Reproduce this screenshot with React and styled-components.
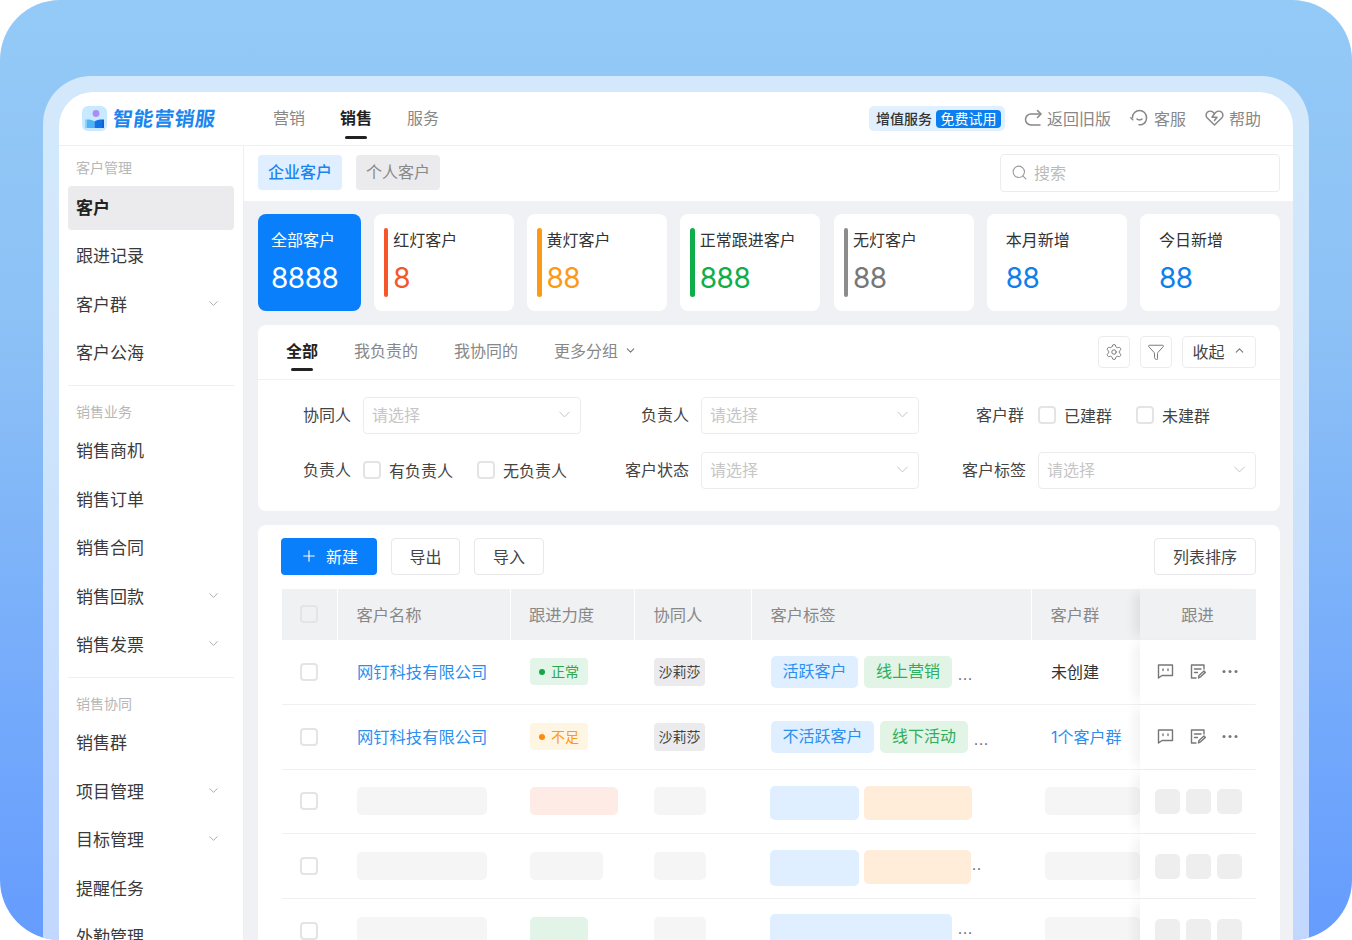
import React from "react";
import styled, { createGlobalStyle } from "styled-components";
import { Search, ChevronDown, ChevronUp, Settings, Funnel, Plus } from "lucide-react";

const GlobalStyle = createGlobalStyle`
  html, body {
    margin: 0;
    background: #fff;
    font-family: Inter, "Noto Sans CJK SC", sans-serif;
    color: #333;
    overflow: hidden;
  }
  * { box-sizing: border-box; }
`;

const Stage = styled.div`
  width: 1352px;
  height: 940px;
  padding: 76px 43px 0;
  border-radius: 60px;
  overflow: hidden;
  background: linear-gradient(180deg, #94caf6 0%, #8cc1f6 35%, #659cfe 100%);
`;

const Frame = styled.div`
  height: 864px;
  padding: 16px 16px 0;
  border-radius: 48px 48px 0 0;
  background: rgba(255, 255, 255, 0.6);
`;

const Shell = styled.div`
  height: 848px;
  border-radius: 34px 34px 0 0;
  overflow: hidden;
  background: #fff;
  display: flex;
  flex-direction: column;
`;

const TopBar = styled.header`
  height: 54px;
  flex: none;
  display: flex;
  align-items: center;
  padding: 0 32px 0 23px;
  border-bottom: 1px solid #f0f0f2;
`;

const Brand = styled.div`
  width: 134px;
  display: flex;
  align-items: center;
  gap: 6px;
`;

const BrandName = styled.span`
  display: inline-block;
  margin-top: -3px;
  font-size: 20px;
  font-weight: 700;
  letter-spacing: 0.6px;
  color: #1b86ee;
  white-space: nowrap;
  transform: skewX(-7deg);
`;

const TopNav = styled.nav`
  margin: -4px 0 0 57px;
  display: flex;
  gap: 35px;
`;

const TopNavItem = styled.span`
  position: relative;
  font-size: 16px;
  font-weight: ${(p) => (p.$active ? 700 : 400)};
  color: ${(p) => (p.$active ? "#222" : "#888")};
  &::after {
    content: "";
    display: ${(p) => (p.$active ? "block" : "none")};
    position: absolute;
    left: 5px;
    right: 5px;
    bottom: -10px;
    height: 3px;
    border-radius: 2px;
    background: #222;
  }
`;

const TopActions = styled.div`
  margin-left: auto;
  display: flex;
  align-items: center;
  gap: 19px;
`;

const ValueChip = styled.div`
  height: 25px;
  padding: 0 4px 2px 7px;
  display: flex;
  align-items: center;
  gap: 4px;
  border-radius: 5px;
  background: #e0f0ff;
  font-size: 14px;
  font-weight: 500;
  color: #333;
`;

const ChipBadge = styled.span`
  height: 18px;
  margin-bottom: -2px;
  line-height: 17px;
  padding: 0 4.5px;
  border-radius: 4px;
  background: #0b7ff0;
  color: #fff;
  font-weight: 400;
`;

const TopAction = styled.span`
  margin-top: -2px;
  display: flex;
  align-items: center;
  gap: 5px;
  font-size: 16px;
  color: #888;
`;

const Body = styled.div`
  flex: 1;
  min-height: 0;
  display: flex;
`;

const Sidebar = styled.aside`
  width: 185px;
  flex: none;
  padding: 0 9px;
  border-right: 1px solid #efeff1;
`;

const MenuSection = styled.section`
  padding: ${(p) => (p.$first ? "12px" : "16px")} 0 9.5px;
  border-bottom: ${(p) => (p.$last ? "none" : "1.5px solid #efefef")};
`;

const MenuTitle = styled.div`
  height: 20px;
  line-height: 20px;
  margin: 0 0 8px 8px;
  font-size: 14px;
  color: #b7b7b7;
`;

const MenuList = styled.div`
  display: flex;
  flex-direction: column;
  gap: 5px;
`;

const MenuItem = styled.div`
  height: 43.5px;
  padding: 0 13px 3px 8px;
  display: flex;
  align-items: center;
  justify-content: space-between;
  border-radius: 4px;
  font-size: 17px;
  font-weight: ${(p) => (p.$active ? 700 : 400)};
  color: ${(p) => (p.$active ? "#222" : "#3a3a3a")};
  background: ${(p) => (p.$active ? "#ebebed" : "transparent")};
`;

const Main = styled.main`
  flex: 1;
  min-width: 0;
  background: #f0f1f5;
`;

const SubBar = styled.div`
  height: 55px;
  padding: 8px 13px 0 14px;
  display: flex;
  align-items: flex-start;
  gap: 14px;
  background: #fff;
`;

const SubTab = styled.span`
  margin-top: 1px;
  height: 35px;
  line-height: 35px;
  padding: 0 10px;
  border-radius: 4px;
  font-size: 16px;
  font-weight: ${(p) => (p.$active ? 500 : 400)};
  color: ${(p) => (p.$active ? "#1d84ee" : "#888")};
  background: ${(p) => (p.$active ? "#e0efff" : "#ebebed")};
`;

const SearchBox = styled.div`
  margin-left: auto;
  width: 280px;
  height: 38px;
  padding: 0 10px 2px;
  display: flex;
  align-items: center;
  gap: 6px;
  border: 1.5px solid #ececee;
  border-radius: 4px;
  font-size: 16px;
  color: #bbb;
`;

const Content = styled.div`
  padding: 13px 13px 0 14px;
  display: flex;
  flex-direction: column;
  gap: 14px;
`;

const StatRow = styled.div`
  display: grid;
  grid-template-columns: 102.5px repeat(6, 140px);
  justify-content: space-between;
`;

const StatCard = styled.div`
  height: 97px;
  padding: 14px 10px 14px ${(p) => (p.$primary ? "13px" : p.$bar ? "10px" : "19px")};
  display: flex;
  gap: 5px;
  border-radius: 8px;
  background: ${(p) => (p.$primary ? "#0a7ffb" : "#fff")};
  color: ${(p) => (p.$primary ? "#fff" : "#333")};
`;

const StatBar = styled.span`
  width: 4.5px;
  border-radius: 3px;
  background: ${(p) => p.$color};
`;

const StatText = styled.div`
  display: flex;
  flex-direction: column;
  gap: 9px;
`;

const StatLabel = styled.span`
  height: 24px;
  line-height: 24px;
  font-size: 16px;
  white-space: nowrap;
`;

const StatValue = styled.span`
  height: 34px;
  line-height: 34px;
  font-size: 28px;
  font-weight: 400;
  letter-spacing: -0.5px;
  color: ${(p) => p.$color || "inherit"};
`;

const Card = styled.section`
  border-radius: 8px 8px 0 0;
  background: #fff;
`;

const FilterCard = styled(Card)`
  height: 186px;
  border-radius: 8px;
`;

const GroupBar = styled.div`
  height: 55px;
  padding: 0 24px 0 28px;
  display: flex;
  align-items: center;
  gap: 36px;
  border-bottom: 1.5px solid #f1f1f3;
`;

const GroupTab = styled.span`
  position: relative;
  margin-top: -4px;
  display: flex;
  align-items: center;
  gap: 6px;
  font-size: 16px;
  font-weight: ${(p) => (p.$active ? 700 : 400)};
  color: ${(p) => (p.$active ? "#222" : "#888")};
  &::after {
    content: "";
    display: ${(p) => (p.$active ? "block" : "none")};
    position: absolute;
    left: 5px;
    right: 5px;
    bottom: -9px;
    height: 3px;
    border-radius: 2px;
    background: #222;
  }
`;

const GroupTools = styled.div`
  margin-left: auto;
  display: flex;
  gap: 10px;
`;

const ToolButton = styled.button`
  width: ${(p) => (p.$wide ? "74px" : "32px")};
  height: 32px;
  padding: 0 0 ${(p) => (p.$wide ? "3px" : "0")};
  display: flex;
  align-items: center;
  justify-content: center;
  gap: 8px;
  border: 1.5px solid #ececee;
  border-radius: 4px;
  background: #fff;
  font: inherit;
  font-size: 16px;
  color: #444;
`;

const FilterGrid = styled.div`
  padding: 17px 24px 0 0;
  display: grid;
  grid-template-columns: 323px 338px 337px;
  row-gap: 18px;
`;

const Field = styled.div`
  height: 37px;
  display: flex;
  align-items: center;
  justify-content: flex-end;
  gap: ${(p) => p.$gap ?? 12}px;
`;

const FieldLabel = styled.span`
  margin-top: -3px;
  font-size: 16px;
  color: #444;
`;

const Select = styled.div`
  width: 218px;
  height: 37px;
  padding: 0 6px 3px 8px;
  display: flex;
  align-items: center;
  justify-content: space-between;
  border: 1.5px solid #ececee;
  border-radius: 4px;
  font-size: 16px;
  color: #c6c6c6;
`;

const Options = styled.div`
  width: 218px;
  margin-top: -2px;
  display: flex;
  gap: 24px;
`;

const Option = styled.label`
  display: flex;
  align-items: center;
  gap: 8px;
  font-size: 16px;
  color: #444;
`;

const Check = styled.span`
  display: block;
  flex: none;
  width: 18px;
  height: 18px;
  border: 2px solid #e4e4e6;
  border-radius: 4px;
  background: ${(p) => (p.$muted ? "transparent" : "#fff")};
`;

const TableCard = styled(Card)`
  padding: 13px 24px 0 24px;
`;

const Toolbar = styled.div`
  height: 37px;
  margin: 0 0 14px -1px;
  display: flex;
  gap: 14px;
`;

const ActionButton = styled.button`
  width: ${(p) => p.$width}px;
  height: 37px;
  padding: 0 0 2px;
  margin-left: ${(p) => (p.$push ? "auto" : "0")};
  display: flex;
  align-items: center;
  justify-content: center;
  gap: 8px;
  border: ${(p) => (p.$primary ? "none" : "1.5px solid #e8e8ea")};
  border-radius: 4px;
  background: ${(p) => (p.$primary ? "#0a7ffb" : "#fff")};
  color: ${(p) => (p.$primary ? "#fff" : "#444")};
  font: inherit;
  font-size: 16px;
`;

const columns = "56px 173px 124px 117px 280px 108px 116px";

const HeadRow = styled.div`
  display: grid;
  grid-template-columns: ${columns};
  height: 51px;
`;

const HeadCell = styled.div`
  padding: 0 0 2px ${(p) => p.$pad ?? 18.5}px;
  display: flex;
  align-items: center;
  justify-content: ${(p) => (p.$center ? "center" : "flex-start")};
  border-right: 1.5px solid ${(p) => (p.$seam ? "#fff" : "transparent")};
  background: #f0f1f3;
  font-size: 16.3px;
  color: #888;
`;

const PinnedHead = styled(HeadCell)`
  box-shadow: -10px 0 10px -4px rgba(0, 0, 0, 0.07);
`;

const Row = styled.div`
  display: grid;
  grid-template-columns: ${columns};
  height: 64.8px;
  border-bottom: 1.5px solid #f0f0f2;
`;

const Cell = styled.div`
  min-width: 0;
  padding-left: ${(p) => p.$pad ?? 18}px;
  display: flex;
  align-items: center;
  gap: 6px;
  overflow: hidden;
  font-size: 16px;
  white-space: nowrap;
`;

const TagCell = styled(Cell)`
  padding-top: ${(p) => p.$top}px;
  gap: 5px;
  align-items: flex-start;
`;

const PinnedCell = styled(Cell)`
  gap: ${(p) => p.$gap}px;
  overflow: visible;
  background: #fff;
  box-shadow: -10px 0 10px -4px rgba(0, 0, 0, 0.05);
`;

const CellText = styled.span`
  margin-top: -2px;
  color: ${(p) => (p.$link ? "#2b8ff0" : "#333")};
  font-size: ${(p) => p.$size || 16}px;
`;

const StatusTag = styled.span`
  height: 27px;
  padding: 0 9px 2px 9px;
  display: flex;
  align-items: center;
  gap: 6px;
  border-radius: 4px;
  font-size: 14px;
  color: ${(p) => p.$color};
  background: ${(p) => p.$bg};
  &::before {
    content: "";
    width: 6px;
    height: 6px;
    margin-bottom: -2px;
    border-radius: 50%;
    background: ${(p) => p.$dot};
  }
`;

const PersonTag = styled.span`
  height: 28px;
  line-height: 27px;
  padding: 0 4.5px;
  border-radius: 4px;
  background: #ebebed;
  font-size: 14px;
  color: #444;
`;

const LabelTag = styled.span`
  height: 32px;
  line-height: 31px;
  padding: 0 ${(p) => (p.$tone === "green" ? 12 : 11.5)}px;
  border-radius: 5px;
  color: ${(p) => (p.$tone === "green" ? "#2fae5c" : "#2b8ff0")};
  background: ${(p) => (p.$tone === "green" ? "#e2f4e6" : "#dfefff")};
`;

const Dots = styled.span`
  margin-top: 6px;
  font-size: 14px;
  color: #555;
  letter-spacing: 1px;
`;

const SkeletonDots = styled(Dots)`
  margin-left: ${(p) => p.$shift}px;
`;

const Skeleton = styled.span`
  flex: none;
  display: block;
  width: ${(p) => p.$w}px;
  height: ${(p) => p.$h || 28}px;
  border-radius: 5px;
  background: ${(p) => p.$bg || "#f5f5f5"};
`;

const IconButton = styled.span`
  width: 26px;
  display: flex;
  justify-content: center;
  color: #777;
`;

const LogoMark = () => (
  <svg width="25" height="25" viewBox="0 0 25 25">
    <rect width="25" height="25" rx="6" fill="#c8e9ff" />
    <circle cx="14" cy="7.5" r="3.4" fill="#a98cf5" />
    <path d="M5 13.5c3 0 5.5.6 7.5 2V22H5z" fill="#4db4f5" />
    <path d="M20 13.5c-3 0-5.5.6-7.5 2V22H20z" fill="#1273e6" />
    <path d="M20 13.5h2V22h-2z" fill="#0d62d4" />
    <path d="M5 13.5H3V22h2z" fill="#87d2fa" />
  </svg>
);

const BackIcon = () => (
  <svg width="18" height="18" viewBox="0 0 18 18" fill="none" stroke="#888" strokeWidth="1.5" strokeLinecap="round" strokeLinejoin="round">
    <path d="M16.5 5H7a5.5 5.5 0 0 0 0 11h9" />
    <path d="M13.5 1.5L17 5l-3.5 3.5" />
  </svg>
);

const ServiceIcon = () => (
  <svg width="19" height="19" viewBox="0 0 19 19" fill="none" stroke="#888" strokeWidth="1.5" strokeLinecap="round">
    <path d="M2.5 9.5a7 7 0 0 1 14 0" />
    <path d="M.8 9.8l2 1.900" />
    <path d="M16.5 9.5a7.5 7.5 0 0 1-5 7.300H9" />
    <path d="M7 11c1.2 1.2 3.8 1.2 5 0" />
  </svg>
);

const HeartIcon = () => (
  <svg width="19" height="18" viewBox="0 0 19 18" fill="none" stroke="#888" strokeWidth="1.5" strokeLinejoin="round" strokeLinecap="round">
    <path d="M9.5 16L2.3 9a4 4 0 0 1 0-5.700 4.2 4.2 0 0 1 5.800 0l1.400 1.400 1.400-1.400a4.2 4.2 0 0 1 5.800 0 4 4 0 0 1 0 5.700z" />
    <path d="M9.5 4.700L7 8.200h5L9.500 11.500" />
  </svg>
);

const CommentIcon = () => (
  <svg width="17" height="17" viewBox="0 0 17 17" fill="none" stroke="currentColor" strokeWidth="1.4" strokeLinejoin="round">
    <path d="M1.5 2h14v10.500H5L1.500 15z" />
    <path d="M6 6v1.500M11 6v1.500" strokeLinecap="round" />
  </svg>
);

const NoteIcon = () => (
  <svg width="16" height="17" viewBox="0 0 16 17" fill="none" stroke="currentColor" strokeWidth="1.4" strokeLinecap="round" strokeLinejoin="round">
    <path d="M14 6V2H1.500v13H6" />
    <path d="M4.5 6h6.500M4.500 9.500h3" />
    <path d="M8.5 15l.5-2.500 5-4.500 1.300 1.500-5 4.500z" />
  </svg>
);

const MoreIcon = () => (
  <svg width="18" height="17" viewBox="0 0 18 17" fill="currentColor">
    <circle cx="3" cy="8.5" r="1.5" />
    <circle cx="9" cy="8.5" r="1.5" />
    <circle cx="15" cy="8.5" r="1.5" />
  </svg>
);

const menu = [
  { title: "客户管理", items: [["客户", false, true], ["跟进记录"], ["客户群", true], ["客户公海"]] },
  { title: "销售业务", items: [["销售商机"], ["销售订单"], ["销售合同"], ["销售回款", true], ["销售发票", true]] },
  { title: "销售协同", items: [["销售群"], ["项目管理", true], ["目标管理", true], ["提醒任务"], ["外勤管理"]] },
];

const stats = [
  { label: "全部客户", value: "8888", primary: true },
  { label: "红灯客户", value: "8", color: "#f5562a", bar: "#f5562a" },
  { label: "黄灯客户", value: "88", color: "#fb9a16", bar: "#fb9a16" },
  { label: "正常跟进客户", value: "888", color: "#0fae48", bar: "#0fae48" },
  { label: "无灯客户", value: "88", color: "#777", bar: "#8c8c8c" },
  { label: "本月新增", value: "88", color: "#0f7fec" },
  { label: "今日新增", value: "88", color: "#0f7fec" },
];

const headers = [
  ["客户名称", true],
  ["跟进力度", true, 18],
  ["协同人", true],
  ["客户标签", true],
  ["客户群", false],
];

const customers = [
  {
    status: { text: "正常", color: "#2aa84f", bg: "#e3f4e8", dot: "#11a845" },
    tags: ["活跃客户", "线上营销"],
    group: "未创建",
  },
  {
    status: { text: "不足", color: "#fb9a16", bg: "#fff5e3", dot: "#fb8c0e" },
    tags: ["不活跃客户", "线下活动"],
    group: "1个客户群",
    groupLink: true,
  },
];

const skeletons = [
  { top: 16, status: [88, "#feebe6"], tags: [[89, 34, "#dfefff"], [108, 34, "#ffecd9"]] },
  { top: 16, status: [73, "#f5f5f5"], tags: [[89, 36, "#dfefff"], [107, 34, "#ffecd9"]], dots: "..", shift: -4 },
  { top: 15, status: [58, "#e2f4e8"], tags: [[182, 36, "#dfefff"]], dots: "...", shift: 1 },
];

const SelectField = ({ label }) => (
  <Field>
    <FieldLabel>{label}</FieldLabel>
    <Select>
      请选择
      <ChevronDown size={19} strokeWidth={1.1} color="#bbb" />
    </Select>
  </Field>
);

const CheckField = ({ label, options, gap }) => (
  <Field $gap={gap}>
    <FieldLabel>{label}</FieldLabel>
    <Options>
      {options.map((o) => (
        <Option key={o}>
          <Check />
          {o}
        </Option>
      ))}
    </Options>
  </Field>
);

export default function App() {
  return (
    <Stage>
      <GlobalStyle />
      <Frame>
        <Shell>
          <TopBar>
            <Brand>
              <LogoMark />
              <BrandName>智能营销服</BrandName>
            </Brand>
            <TopNav>
              <TopNavItem>营销</TopNavItem>
              <TopNavItem $active>销售</TopNavItem>
              <TopNavItem>服务</TopNavItem>
            </TopNav>
            <TopActions>
              <ValueChip>
                增值服务
                <ChipBadge>免费试用</ChipBadge>
              </ValueChip>
              <TopAction><BackIcon />返回旧版</TopAction>
              <TopAction><ServiceIcon />客服</TopAction>
              <TopAction><HeartIcon />帮助</TopAction>
            </TopActions>
          </TopBar>
          <Body>
            <Sidebar>
              {menu.map((section, i) => (
                <MenuSection key={section.title} $first={i === 0} $last={i === menu.length - 1}>
                  <MenuTitle>{section.title}</MenuTitle>
                  <MenuList>
                    {section.items.map(([name, more, active]) => (
                      <MenuItem key={name} $active={active}>
                        {name}
                        {more && <ChevronDown size={15} strokeWidth={1.3} color="#999" />}
                      </MenuItem>
                    ))}
                  </MenuList>
                </MenuSection>
              ))}
            </Sidebar>
            <Main>
              <SubBar>
                <SubTab $active>企业客户</SubTab>
                <SubTab>个人客户</SubTab>
                <SearchBox>
                  <Search size={17} strokeWidth={1.5} color="#999" />
                  搜索
                </SearchBox>
              </SubBar>
              <Content>
                <StatRow>
                  {stats.map((s) => (
                    <StatCard key={s.label} $primary={s.primary} $bar={s.bar}>
                      {s.bar && <StatBar $color={s.bar} />}
                      <StatText>
                        <StatLabel>{s.label}</StatLabel>
                        <StatValue $color={s.color}>{s.value}</StatValue>
                      </StatText>
                    </StatCard>
                  ))}
                </StatRow>
                <FilterCard>
                  <GroupBar>
                    <GroupTab $active>全部</GroupTab>
                    <GroupTab>我负责的</GroupTab>
                    <GroupTab>我协同的</GroupTab>
                    <GroupTab>
                      更多分组
                      <ChevronDown size={13} strokeWidth={2} color="#777" />
                    </GroupTab>
                    <GroupTools>
                      <ToolButton><Settings size={18} strokeWidth={1.3} color="#777" /></ToolButton>
                      <ToolButton><Funnel size={18} strokeWidth={1.3} color="#777" /></ToolButton>
                      <ToolButton $wide>
                        收起
                        <ChevronUp size={13} strokeWidth={2} color="#777" />
                      </ToolButton>
                    </GroupTools>
                  </GroupBar>
                  <FilterGrid>
                    <SelectField label="协同人" />
                    <SelectField label="负责人" />
                    <CheckField label="客户群" options={["已建群", "未建群"]} gap={14} />
                    <CheckField label="负责人" options={["有负责人", "无负责人"]} />
                    <SelectField label="客户状态" />
                    <SelectField label="客户标签" />
                  </FilterGrid>
                </FilterCard>
                <TableCard>
                  <Toolbar>
                    <ActionButton $primary $width={96}>
                      <Plus size={18} strokeWidth={1.5} />
                      新建
                    </ActionButton>
                    <ActionButton $width={69}>导出</ActionButton>
                    <ActionButton $width={70}>导入</ActionButton>
                    <ActionButton $push $width={102}>列表排序</ActionButton>
                  </Toolbar>
                  <HeadRow>
                    <HeadCell $seam $pad={18}><Check $muted /></HeadCell>
                    {headers.map(([name, seam, pad]) => (
                      <HeadCell key={name} $seam={seam} $pad={pad}>{name}</HeadCell>
                    ))}
                    <PinnedHead $center $pad={0}>跟进</PinnedHead>
                  </HeadRow>
                  {customers.map((c) => (
                    <Row key={c.tags[0]}>
                      <Cell><Check /></Cell>
                      <Cell $pad={19}><CellText $link $size={16.3}>网钉科技有限公司</CellText></Cell>
                      <Cell $pad={19}>
                        <StatusTag $color={c.status.color} $bg={c.status.bg} $dot={c.status.dot}>
                          {c.status.text}
                        </StatusTag>
                      </Cell>
                      <Cell $pad={19}><PersonTag>沙莉莎</PersonTag></Cell>
                      <Cell $pad={19}>
                        <LabelTag>{c.tags[0]}</LabelTag>
                        <LabelTag $tone="green">{c.tags[1]}</LabelTag>
                        <Dots>...</Dots>
                      </Cell>
                      <Cell $pad={19}>
                        <CellText $link={c.groupLink}>{c.group}</CellText>
                      </Cell>
                      <PinnedCell $pad={12} $gap={6.5}>
                        <IconButton><CommentIcon /></IconButton>
                        <IconButton><NoteIcon /></IconButton>
                        <IconButton><MoreIcon /></IconButton>
                      </PinnedCell>
                    </Row>
                  ))}
                  {skeletons.map((s) => (
                    <Row key={s.status[0]}>
                      <Cell><Check /></Cell>
                      <Cell $pad={19}><Skeleton $w={130} /></Cell>
                      <Cell $pad={19}><Skeleton $w={s.status[0]} $bg={s.status[1]} /></Cell>
                      <Cell $pad={19}><Skeleton $w={52} /></Cell>
                      <TagCell $pad={18} $top={s.top}>
                        {s.tags.map(([w, h, bg]) => (
                          <Skeleton key={bg} $w={w} $h={h} $bg={bg} />
                        ))}
                        {s.dots && <SkeletonDots $shift={s.shift}>{s.dots}</SkeletonDots>}
                      </TagCell>
                      <Cell $pad={13}><Skeleton $w={95} /></Cell>
                      <PinnedCell $pad={15} $gap={6}>
                        <Skeleton $w={25} $h={25} $bg="#eeeeee" />
                        <Skeleton $w={25} $h={25} $bg="#eeeeee" />
                        <Skeleton $w={25} $h={25} $bg="#eeeeee" />
                      </PinnedCell>
                    </Row>
                  ))}
                </TableCard>
              </Content>
            </Main>
          </Body>
        </Shell>
      </Frame>
    </Stage>
  );
}
